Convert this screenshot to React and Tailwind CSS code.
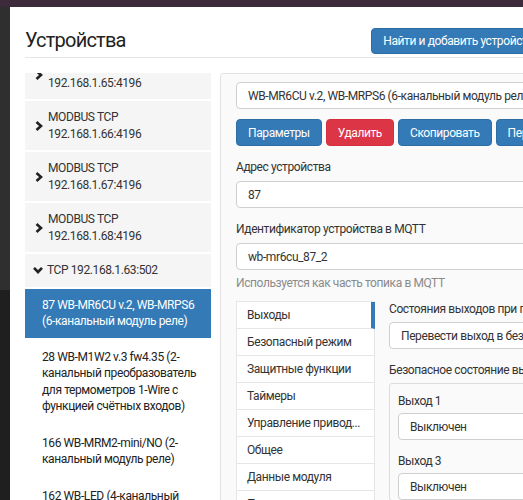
const buses = [
  { name: "MODBUS TCP", addr: "192.168.1.65:4196" },
  { name: "MODBUS TCP", addr: "192.168.1.66:4196" },
  { name: "MODBUS TCP", addr: "192.168.1.67:4196" },
  { name: "MODBUS TCP", addr: "192.168.1.68:4196" },
];

const devices = [
  "28 WB-M1W2 v.3 fw4.35 (2-канальный преобразователь для термометров 1-Wire с функцией счётных входов)",
  "166 WB-MRM2-mini/NO (2-канальный модуль реле)",
  "162 WB-LED (4-канальный диммер светодиодных лент)",
];

const tabs = [
  "Выходы",
  "Безопасный режим",
  "Защитные функции",
  "Таймеры",
  "Управление привод...",
  "Общее",
  "Данные модуля",
  "Прошивка",
];

function ArrowRight() {
  return (
    <svg width="8" height="10" viewBox="0 0 8 10" className="shrink-0">
      <path d="M1.5 1 L6 5 L1.5 9" fill="none" stroke="#222" strokeWidth="2.6" />
    </svg>
  );
}

function ArrowDown() {
  return (
    <svg width="10" height="8" viewBox="0 0 10 8" className="shrink-0">
      <path d="M1 1.8 L5 6 L9 1.8" fill="none" stroke="#222" strokeWidth="2.6" />
    </svg>
  );
}

function Field({ children, className = "" }) {
  return (
    <div
      className={`h-[27px] flex items-center px-[11px] bg-white border border-[#cfcfcf] rounded-[4px] whitespace-nowrap overflow-hidden ${className}`}
    >
      {children}
    </div>
  );
}

function Btn({ children, red }) {
  return (
    <div
      className={`h-[27px] shrink-0 flex items-center px-[11px] rounded-[4px] text-white border ${
        red ? "bg-[#dc3545] border-[#d42f3f]" : "bg-[#337ab7] border-[#2e6da4]"
      }`}
    >
      {children}
    </div>
  );
}

export default function App() {
  return (
    <div className="w-[523px] h-[500px] overflow-hidden flex flex-col bg-[#252525] font-['Roboto',sans-serif] text-[12px] tracking-[-0.4px] text-[#333]">
      {/* top bar of the page behind */}
      <div className="h-[7px] shrink-0 bg-[#3d2b3b]" />

      <div className="flex flex-1 min-h-0">
        {/* page behind the modal */}
        <div className="w-[10px] shrink-0 flex flex-col">
          <div className="h-[283px] bg-[#2f2f2f]" />
          <div className="flex-1 bg-[#1f1f1f]" />
        </div>

        {/* Modal */}
        <div className="w-[557px] shrink-0 bg-white px-[15px]">
          {/* Header */}
          <div className="h-[51px] flex items-start justify-between border-b border-[#e5e5e5]">
            <h2 className="mt-[21px] text-[20px] leading-[24px] tracking-[-0.8px] text-[#222]">Устройства</h2>
            <div className="mt-[21px] h-[26px] flex items-center px-[11px] rounded-[4px] bg-[#337ab7] border border-[#2e6da4] text-white whitespace-nowrap">
              Найти и добавить устройства
            </div>
          </div>

          {/* Body */}
          <div className="flex gap-[9px] pt-[15px]">
            {/* Port / device list */}
            <div className="w-[186px] shrink-0 h-[430px] overflow-hidden">
              <div className="-mt-[23px] flex flex-col gap-[2px] leading-[16.5px]">
                {buses.map((b) => (
                  <div key={b.addr} className="bg-[#f5f5f5] py-[8px] pl-[10px] flex items-center gap-[5px]">
                    <ArrowRight />
                    <div>
                      <div>{b.name}</div>
                      <div>{b.addr}</div>
                    </div>
                  </div>
                ))}
                <div className="bg-[#f5f5f5] py-[8px] pl-[8px] flex items-center gap-[4px]">
                  <ArrowDown />
                  <div>TCP 192.168.1.63:502</div>
                </div>
                <div className="bg-[#337ab7] text-white py-[8px] pl-[17px] pr-[8px]">
                  87 WB-MR6CU v.2, WB-MRPS6 (6-канальный модуль реле)
                </div>
                {devices.map((d) => (
                  <div key={d} className="py-[9px] pl-[17px] pr-[10px] text-[#222]">
                    {d}
                  </div>
                ))}
              </div>
            </div>

            {/* Device settings panel */}
            <div className="flex-1 border border-[#e3e3e3] rounded-[3px] bg-[#fafafa] px-[15px] pt-[8px] h-[440px]">
              <Field>WB-MR6CU v.2, WB-MRPS6 (6-канальный модуль реле)</Field>

              <div className="flex gap-[4px] mt-[10px]">
                <Btn>Параметры</Btn>
                <Btn red>Удалить</Btn>
                <Btn>Скопировать</Btn>
                <Btn>Переместить</Btn>
              </div>

              <div className="mt-[13px] leading-[17px]">Адрес устройства</div>
              <Field className="mt-[5px]">87</Field>

              <div className="mt-[13px] leading-[17px]">Идентификатор устройства в MQTT</div>
              <Field className="mt-[5px]">wb-mr6cu_87_2</Field>
              <div className="mt-[5px] leading-[17px] text-[#8a8a8a]">Используется как часть топика в MQTT</div>

              <div className="flex mt-[9px]">
                {/* vertical tabs */}
                <div className="w-[139px] shrink-0 flex flex-col border-t border-[#e6e6e6]">
                  {tabs.map((t, i) => (
                    <div
                      key={t}
                      className={`h-[27px] flex items-center pl-[10px] bg-white border-b border-l border-[#e6e6e6] whitespace-nowrap ${
                        i === 0 ? "border-r-4 border-r-[#337ab7]" : "border-r"
                      }`}
                    >
                      {t}
                    </div>
                  ))}
                </div>

                {/* tab content */}
                <div className="flex-1 pl-[14px] min-w-0">
                  <div className="leading-[17px] whitespace-nowrap">Состояния выходов при потере связи</div>
                  <Field className="mt-[4px]">Перевести выход в безопасное состояние</Field>
                  <div className="mt-[13px] leading-[17px] whitespace-nowrap">Безопасное состояние выходов</div>
                  <div className="mt-[4px] border border-[#dcdcdc] rounded-[3px] bg-[#fafafa] px-[8px] pt-[9px]">
                    <div className="leading-[17px]">Выход 1</div>
                    <Field className="mt-[3px]">Выключен</Field>
                    <div className="mt-[13px] leading-[17px]">Выход 3</div>
                    <Field className="mt-[3px]">Выключен</Field>
                  </div>
                </div>
              </div>
            </div>
          </div>
        </div>
      </div>
    </div>
  );
}
